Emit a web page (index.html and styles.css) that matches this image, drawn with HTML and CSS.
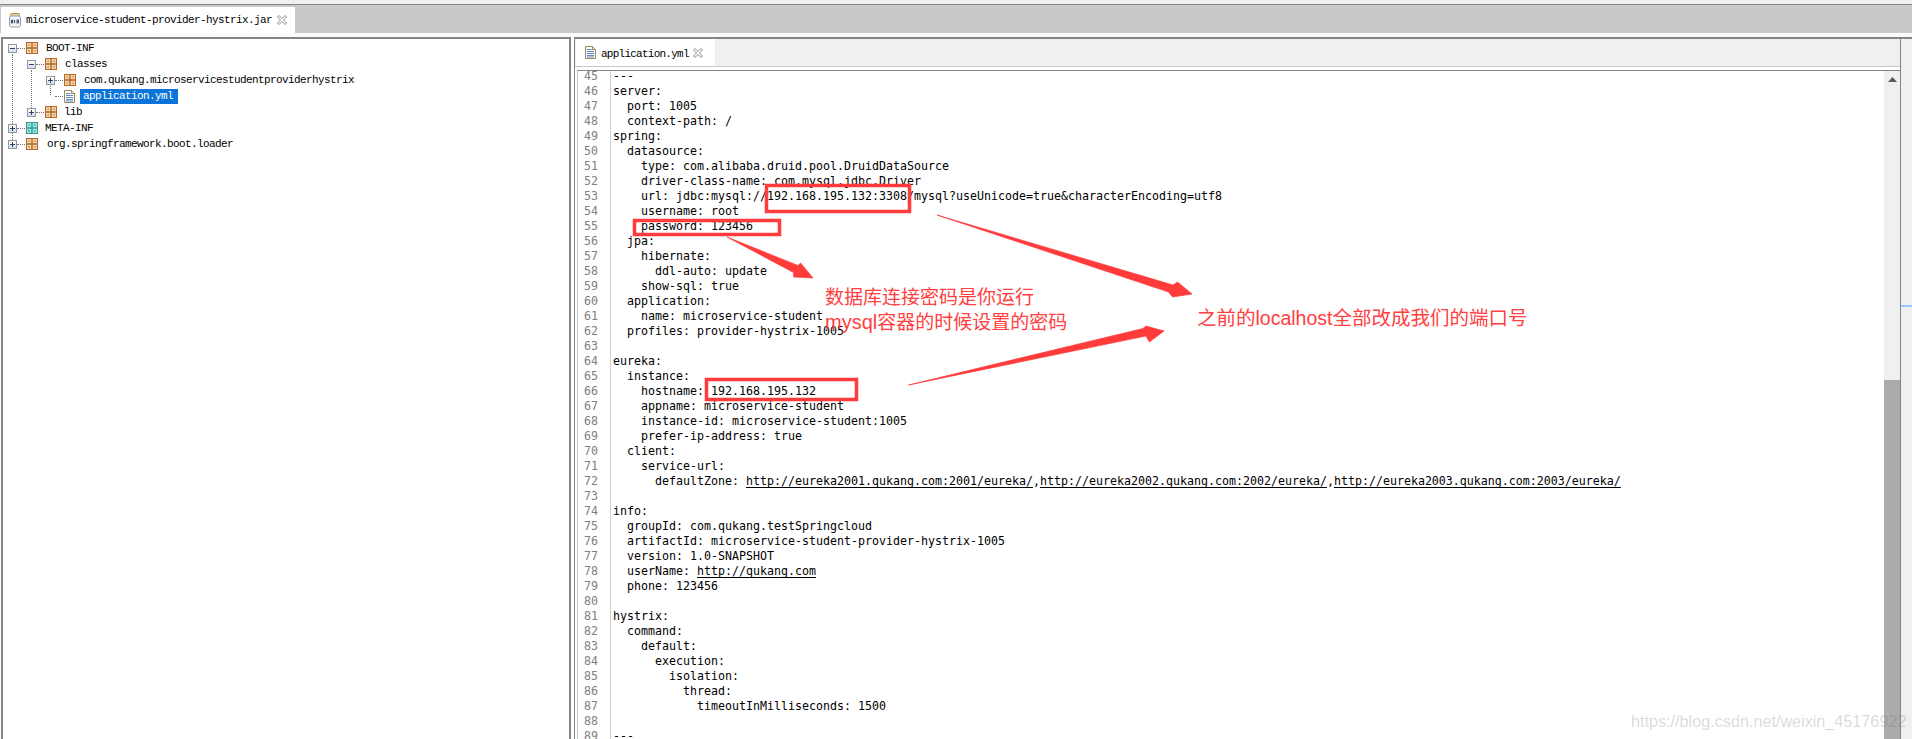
FILE: index.html
```html
<!DOCTYPE html>
<html lang="zh">
<head>
<meta charset="utf-8">
<title>application.yml</title>
<link rel="stylesheet" href="styles.css">
</head>
<body>
<svg class="defs" width="0" height="0" aria-hidden="true">
  <defs>
    <symbol id="pkg" viewBox="0 0 12 12">
      <rect x=".5" y=".5" width="11" height="11" fill="#f3d3ae" stroke="#b4682a"/>
      <path d="M6 0v12M0 6h12" stroke="#b4682a" stroke-width="1.4"/>
      <path d="M2 2h2v2H2zM8 2h2v2H8zM2 8h2v2H2zM8 8h2v2H8z" fill="#e2a870"/>
    </symbol>
    <symbol id="pkg-teal" viewBox="0 0 12 12">
      <rect x=".5" y=".5" width="11" height="11" fill="#a5e0dc" stroke="#2f9a94"/>
      <path d="M6 0v12M0 6h12" stroke="#2f9a94" stroke-width="1.4"/>
      <path d="M2 2h2v2H2zM8 2h2v2H8zM2 8h2v2H2zM8 8h2v2H8z" fill="#62c2bc"/>
    </symbol>
    <symbol id="doc" viewBox="0 0 11 13">
      <path d="M.5.5h7l3 3v9H.5z" fill="#fff" stroke="#9a8a5a"/>
      <path d="M7.5.5v3h3" fill="#eee8d0" stroke="#9a8a5a"/>
      <path d="M2 3.5h4.500M2 5.500h7M2 7.500h7M2 9.500h7M2 11h7" stroke="#5f86c4"/>
    </symbol>
    <symbol id="close" viewBox="0 0 10 10">
      <path d="M.5 2 2 .5l3 3 3-3L9.500 2l-3 3 3 3L8 9.500l-3-3-3 3L.5 8l3-3z" fill="#fff" stroke="#8c8c8c"/>
    </symbol>
  </defs>
</svg>

<div class="top-strip"></div>
<div class="tab-strip">
  <div class="jar-tab">
    <svg class="jar-icon" viewBox="0 0 12 15" width="12" height="15" aria-hidden="true">
      <rect x="1.500" y=".5" width="9" height="3" rx="1" fill="#e8d49a" stroke="#a08c50"/>
      <rect x=".5" y="3" width="11" height="11" rx="2" fill="#f6f8fb" stroke="#8c9bb0"/>
      <rect x="1.500" y="6" width="9" height="5" fill="#dbe6f3"/>
      <path d="M2.500 7v3h1V7zM5.500 7v3M8 7v3h1.500V7z" fill="none" stroke="#33415c" stroke-width=".9"/>
    </svg>
    <span class="jar-name">microservice-student-provider-hystrix.jar</span>
    <svg class="close-icon" aria-hidden="true"><use href="#close"/></svg>
  </div>
</div>
<div class="gap-strip"></div>

<main class="panes">
  <section class="tree-pane">
    <div class="guide guide-a"></div>
    <div class="guide guide-b"></div>
    <div class="guide guide-c"></div>
    <div class="row lv0"><i class="exp minus"></i><i class="dots"></i><svg class="pkg"><use href="#pkg"/></svg><span class="label">BOOT-INF</span></div>
    <div class="row lv1"><i class="exp minus"></i><i class="dots"></i><svg class="pkg"><use href="#pkg"/></svg><span class="label">classes</span></div>
    <div class="row lv2"><i class="exp plus"></i><i class="dots"></i><svg class="pkg"><use href="#pkg"/></svg><span class="label">com.qukang.microservicestudentproviderhystrix</span></div>
    <div class="row lv2"><i class="exp none"></i><i class="dots"></i><svg class="doc"><use href="#doc"/></svg><span class="label selected">application.yml</span></div>
    <div class="row lv1"><i class="exp plus"></i><i class="dots"></i><svg class="pkg"><use href="#pkg"/></svg><span class="label tight">lib</span></div>
    <div class="row lv0"><i class="exp plus"></i><i class="dots"></i><svg class="pkg"><use href="#pkg-teal"/></svg><span class="label tight">META-INF</span></div>
    <div class="row lv0"><i class="exp plus"></i><i class="dots"></i><svg class="pkg"><use href="#pkg"/></svg><span class="label wide">org.springframework.boot.loader</span></div>
  </section>

  <section class="editor-pane">
    <div class="editor-tabs">
      <div class="yml-tab">
        <svg class="doc"><use href="#doc"/></svg>
        <span class="jar-name">application.yml</span>
        <svg class="close-icon" aria-hidden="true"><use href="#close"/></svg>
      </div>
    </div>
    <div class="editor-gap"></div>
    <div class="editor">
      <div class="code-view">
        <div class="code-scroll">
<div class="ln"><b>45</b><code>---</code></div>
<div class="ln"><b>46</b><code>server:</code></div>
<div class="ln"><b>47</b><code>  port: 1005</code></div>
<div class="ln"><b>48</b><code>  context-path: /</code></div>
<div class="ln"><b>49</b><code>spring:</code></div>
<div class="ln"><b>50</b><code>  datasource:</code></div>
<div class="ln"><b>51</b><code>    type: com.alibaba.druid.pool.DruidDataSource</code></div>
<div class="ln"><b>52</b><code>    driver-class-name: com.mysql.jdbc.Driver</code></div>
<div class="ln"><b>53</b><code>    url: jdbc:mysql://192.168.195.132:3308/mysql?useUnicode=true&amp;characterEncoding=utf8</code></div>
<div class="ln"><b>54</b><code>    username: root</code></div>
<div class="ln"><b>55</b><code>    password: 123456</code></div>
<div class="ln"><b>56</b><code>  jpa:</code></div>
<div class="ln"><b>57</b><code>    hibernate:</code></div>
<div class="ln"><b>58</b><code>      ddl-auto: update</code></div>
<div class="ln"><b>59</b><code>    show-sql: true</code></div>
<div class="ln"><b>60</b><code>  application:</code></div>
<div class="ln"><b>61</b><code>    name: microservice-student</code></div>
<div class="ln"><b>62</b><code>  profiles: provider-hystrix-1005</code></div>
<div class="ln"><b>63</b><code></code></div>
<div class="ln"><b>64</b><code>eureka:</code></div>
<div class="ln"><b>65</b><code>  instance:</code></div>
<div class="ln"><b>66</b><code>    hostname: 192.168.195.132</code></div>
<div class="ln"><b>67</b><code>    appname: microservice-student</code></div>
<div class="ln"><b>68</b><code>    instance-id: microservice-student:1005</code></div>
<div class="ln"><b>69</b><code>    prefer-ip-address: true</code></div>
<div class="ln"><b>70</b><code>  client:</code></div>
<div class="ln"><b>71</b><code>    service-url:</code></div>
<div class="ln"><b>72</b><code>      defaultZone: <u>http://eureka2001.qukang.com:2001/eureka/</u>,<u>http://eureka2002.qukang.com:2002/eureka/</u>,<u>http://eureka2003.qukang.com:2003/eureka/</u></code></div>
<div class="ln"><b>73</b><code></code></div>
<div class="ln"><b>74</b><code>info:</code></div>
<div class="ln"><b>75</b><code>  groupId: com.qukang.testSpringcloud</code></div>
<div class="ln"><b>76</b><code>  artifactId: microservice-student-provider-hystrix-1005</code></div>
<div class="ln"><b>77</b><code>  version: 1.0-SNAPSHOT</code></div>
<div class="ln"><b>78</b><code>  userName: <u>http://qukang.com</u></code></div>
<div class="ln"><b>79</b><code>  phone: 123456</code></div>
<div class="ln"><b>80</b><code></code></div>
<div class="ln"><b>81</b><code>hystrix:</code></div>
<div class="ln"><b>82</b><code>  command:</code></div>
<div class="ln"><b>83</b><code>    default:</code></div>
<div class="ln"><b>84</b><code>      execution:</code></div>
<div class="ln"><b>85</b><code>        isolation:</code></div>
<div class="ln"><b>86</b><code>          thread:</code></div>
<div class="ln"><b>87</b><code>            timeoutInMilliseconds: 1500</code></div>
<div class="ln"><b>88</b><code></code></div>
<div class="ln"><b>89</b><code>---</code></div>
        </div>
      </div>
      <div class="scrollbar">
        <div class="track"><svg class="up-arrow" viewBox="0 0 9 5" width="9" height="5" aria-hidden="true"><path d="M4.500 0 9 5H0z" fill="#5a5a5a"/></svg></div>
        <div class="thumb"></div>
      </div>
    </div>
  </section>
  <aside class="right-rail"><div class="rail-mark"></div></aside>
</main>

<svg class="marks" width="1912" height="739" viewBox="0 0 1912 739" aria-hidden="true">
  <rect class="box" x="766.500" y="185.500" width="143" height="26"/>
  <rect class="box" x="634.500" y="220.500" width="145" height="14"/>
  <rect class="box" x="706.500" y="379.500" width="150" height="20"/>
  <polygon class="arrow" points="727,237 798,265.500 800.600,263 813,278 793.700,277 793.500,272.500"/>
  <polygon class="arrow" points="937,215 1173,285 1177.500,282 1192,294 1172.600,297 1168.500,292"/>
  <polygon class="arrow" points="908.500,385 1143,328.500 1146,326 1164,331 1149.400,342 1146,336"/>
</svg>
<p class="note note-db">数据库连接密码是你运行<br><span class="latin">mysql</span>容器的时候设置的密码</p>
<p class="note note-port">之前的localhost全部改成我们的端口号</p>
<p class="watermark">https://blog.csdn.net/weixin_45176922</p>
</body>
</html>
```

FILE: styles.css
```css
* { box-sizing: border-box; }
html, body { margin: 0; padding: 0; }
body {
  width: 1912px;
  height: 739px;
  overflow: hidden;
  position: relative;
  background: #fff;
  display: flex;
  flex-direction: column;
  font-family: "Liberation Mono", monospace;
  color: #000;
}
.defs { position: absolute; }

.top-strip { height: 5px; flex: none; background: #f0f0f0; border-bottom: 1px solid #858585; }
.tab-strip { height: 28px; flex: none; background: #c9c9c9; padding: 2px 0 0 1px; display: flex; }
.gap-strip { height: 4px; flex: none; background: #fbfbfb; }

.jar-tab {
  width: 294px;
  background: #fff;
  display: flex;
  align-items: center;
  padding: 0 0 0 8px;
}
.jar-icon { flex: none; margin-right: 5px; }
.jar-name { font-size: 11px; letter-spacing: -.6px; white-space: pre; }
.close-icon { width: 10px; height: 10px; flex: none; margin-left: 5px; }

.panes { flex: 1; display: flex; min-height: 0; }

.tree-pane {
  width: 570px;
  flex: none;
  position: relative;
  margin-left: 1px;
  border: solid #858585;
  border-width: 2px 2px 0 2px;
  padding-top: 1px;
  background: #fff;
}
.row { height: 16px; display: flex; align-items: center; white-space: pre; font-size: 11px; letter-spacing: -.6px; }
.lv0 { padding-left: 5px; }
.lv1 { padding-left: 24px; }
.lv2 { padding-left: 43px; }
.exp {
  width: 9px;
  height: 9px;
  flex: none;
  border: 1px solid #8f98a3;
  background: linear-gradient(#fff, #d8dde2);
  position: relative;
}
.exp.none { border-color: transparent; background: none; }
.exp.minus::before, .exp.plus::before {
  content: "";
  position: absolute;
  left: 1px;
  top: 3px;
  width: 5px;
  height: 1px;
  background: #2b3f70;
}
.exp.plus::after {
  content: "";
  position: absolute;
  left: 3px;
  top: 1px;
  width: 1px;
  height: 5px;
  background: #2b3f70;
}
.dots { width: 8px; flex: none; border-top: 1px dotted #707070; margin: 0 1px 0 0; }
.pkg { width: 12px; height: 12px; flex: none; }
.doc { width: 11px; height: 13px; flex: none; }
.label { margin-left: 8px; }
.label.tight { margin-left: 7px; }
.label.wide { margin-left: 9px; }
.label.selected {
  margin-left: 5px;
  padding: 0 3px;
  height: 15px;
  line-height: 15px;
  width: 98px;
  background: #0a74d8;
  color: #fff;
}
.guide { position: absolute; width: 0; border-left: 1px dotted #707070; }
.guide-a { left: 9px; top: 15px; height: 90px; }
.guide-b { left: 28px; top: 31px; height: 42px; }
.guide-c { left: 47px; top: 47px; height: 9px; }

.editor-pane {
  width: 1326px;
  flex: none;
  margin-left: 3px;
  border: solid #858585;
  border-width: 2px 0 0 1px;
  display: flex;
  flex-direction: column;
  min-height: 0;
}
.editor-tabs {
  height: 28px;
  flex: none;
  background: #f0f0f0;
  border-bottom: 1px solid #c8c8c8;
  display: flex;
}
.yml-tab {
  width: 139px;
  background: #fff;
  margin-left: 1px;
  display: flex;
  align-items: center;
  padding-left: 9px;
}
.yml-tab .jar-name { margin-left: 5px; padding-top: 2px; letter-spacing: -.75px; }
.yml-tab .close-icon { margin-left: 4px; }
.editor-gap { height: 3px; flex: none; }
.editor {
  flex: 1;
  min-height: 0;
  display: flex;
  margin-left: 2px;
  border-top: 1px solid #858585;
  border-left: 1px solid #c0c0c0;
}
.code-view { flex: 1; min-width: 0; overflow: hidden; }
.code-scroll { margin-top: -2px; }
.ln { height: 15px; display: flex; font-family: "DejaVu Sans Mono", monospace; font-size: 11.63px; line-height: 15px; }
.ln b {
  width: 33px;
  flex: none;
  font-weight: 400;
  color: #808080;
  text-align: right;
  padding-right: 12px;
  border-right: 1px solid #d0d0d0;
}
.ln code { font: inherit; white-space: pre; padding-left: 2px; }
.ln u { text-underline-offset: 2px; }

.scrollbar { width: 16px; flex: none; display: flex; flex-direction: column; }
.track { height: 309px; flex: none; background: #f0f0f0; display: flex; justify-content: center; padding-top: 6px; }
.up-arrow { display: block; }
.thumb { flex: 1; background: #ababab; }

.right-rail {
  flex: 1;
  background: #f0f0f0;
  border-left: 1px solid #858585;
  border-top: 2px solid #858585;
  padding-top: 266px;
}
.rail-mark { height: 2px; background: #9cc4ff; }

.marks { position: absolute; left: 0; top: 0; pointer-events: none; }
.box { fill: none; stroke: #ff3b3b; stroke-width: 3.5; }
.arrow { fill: #ff3b3b; stroke: #ff3b3b; stroke-width: .7; stroke-linejoin: round; }
.note {
  position: absolute;
  margin: 0;
  color: #ff4040;
  font-family: "Liberation Sans", "Noto Sans CJK SC", sans-serif;
  white-space: nowrap;
}
.note-db { left: 825px; top: 285px; font-size: 19px; line-height: 25px; }
.note-db .latin { font-size: 20px; }
.note-port { left: 1197px; top: 305px; font-size: 19.500px; line-height: 26px; }
.watermark {
  position: absolute;
  margin: 0;
  left: 1631px;
  top: 711px;
  font-family: "Liberation Sans", sans-serif;
  font-size: 16.200px;
  line-height: 20px;
  color: rgba(120, 120, 120, .28);
  white-space: nowrap;
}
```
